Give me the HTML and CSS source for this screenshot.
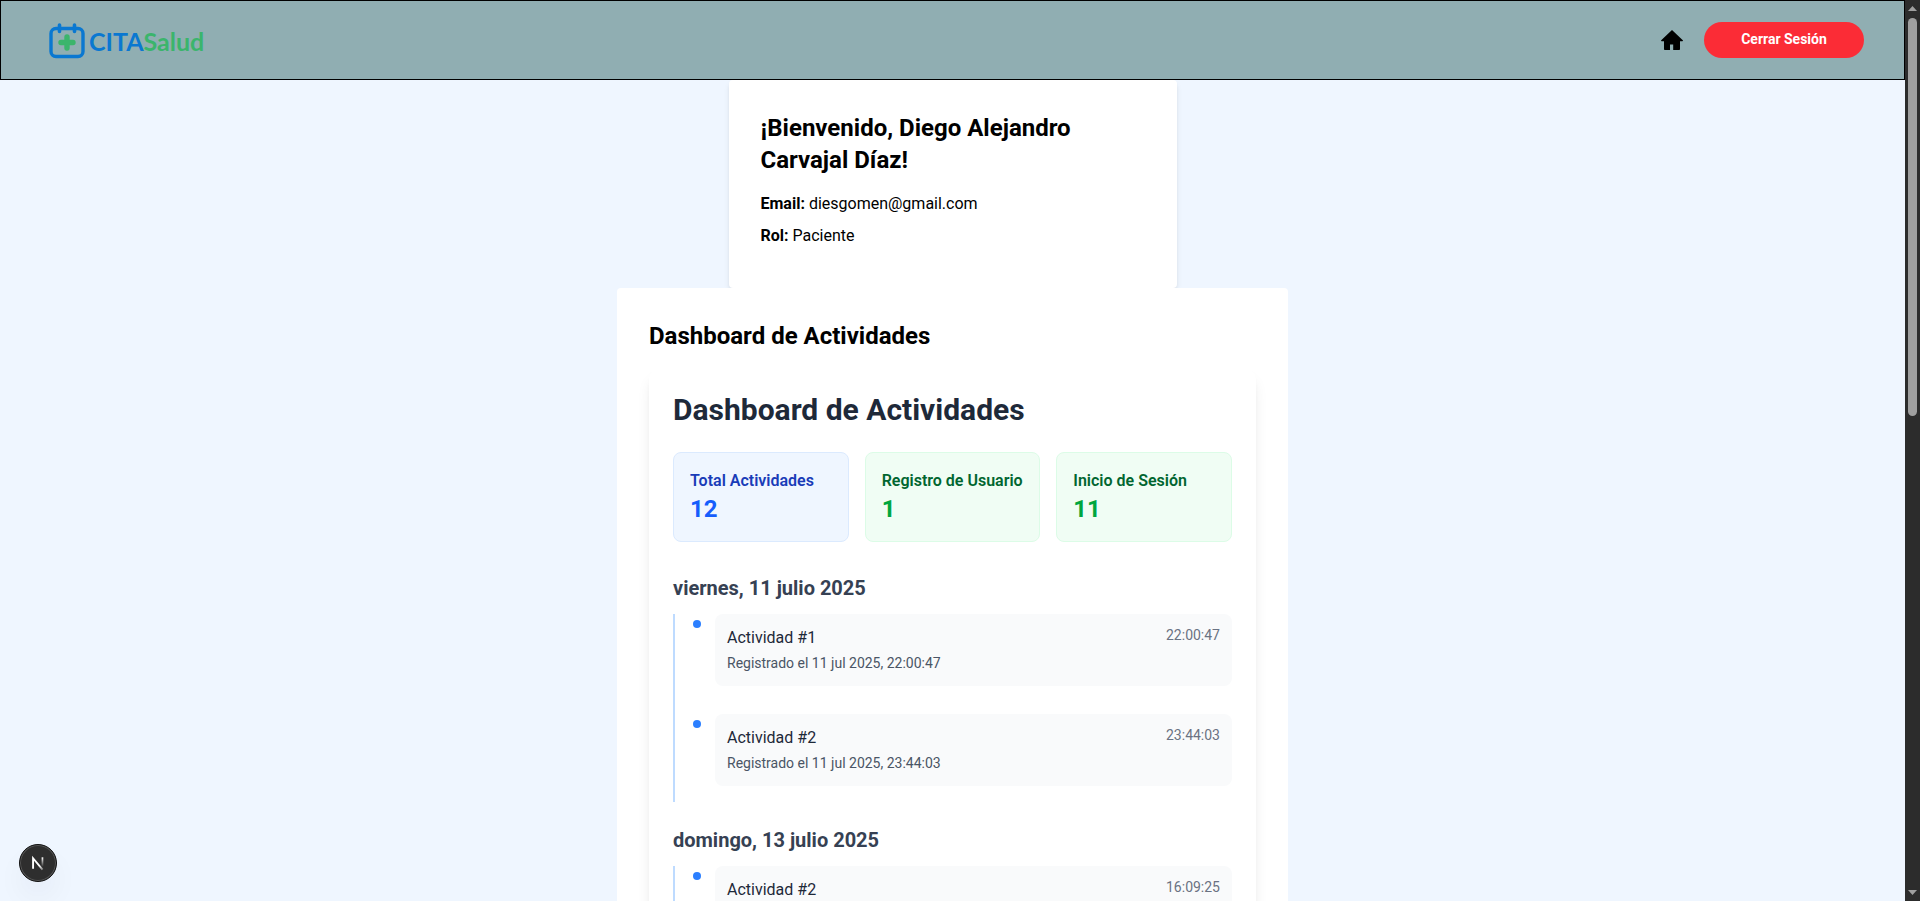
FILE: index.html
```html
<!DOCTYPE html>
<html lang="es">
<head>
<meta charset="utf-8">
<meta name="viewport" content="width=device-width, initial-scale=1">
<title>CITASalud</title>
<link rel="stylesheet" href="styles.css">
</head>
<body>
<div class="window">
  <div class="page">
    <header class="topbar">
      <a class="logo" href="#" aria-label="CITASalud">
        <svg class="logo-mark" viewBox="0 0 36 36" aria-hidden="true">
          <rect x="2" y="5.500" width="32" height="28" rx="5" fill="none" stroke="#0a78d1" stroke-width="3.400"/>
          <path d="M10.500 2v6.500M25.500 2v6.500" stroke="#0a78d1" stroke-width="3.600" stroke-linecap="round"/>
          <path d="M18 14v11M12 19.500h12" stroke="#3bb56c" stroke-width="5.400" stroke-linecap="round"/>
        </svg>
        <span class="logo-text"><span class="logo-cita">CITA</span><span class="logo-salud">Salud</span></span>
      </a>
      <nav class="actions">
        <a class="home" href="#" aria-label="Inicio">
          <svg viewBox="0 0 24 24" width="24" height="24" aria-hidden="true"><path d="M12 2 1.200 12.300c-.4.500-.1.900.4.900H4V21.200c0 .5.300.8.800.8H10v-5.500h3.200V22h6c.5 0 .8-.3.800-.8v-8h2.400c.5 0 .8-.4.400-.9Z"/></svg>
        </a>
        <button class="logout" type="button">Cerrar Sesión</button>
      </nav>
    </header>

    <main class="content">
      <section class="profile">
        <h1 class="title">¡Bienvenido, Diego Alejandro Carvajal Díaz!</h1>
        <p class="field"><strong>Email:</strong> diesgomen@gmail.com</p>
        <p class="field"><strong>Rol:</strong> Paciente</p>
      </section>

      <section class="activities">
        <h2 class="title">Dashboard de Actividades</h2>
        <div class="dashboard">
          <h2 class="dashboard-title">Dashboard de Actividades</h2>
          <div class="stats">
            <div class="stat stat-total"><h3 class="stat-label">Total Actividades</h3><p class="stat-value">12</p></div>
            <div class="stat"><h3 class="stat-label">Registro de Usuario</h3><p class="stat-value">1</p></div>
            <div class="stat"><h3 class="stat-label">Inicio de Sesión</h3><p class="stat-value">11</p></div>
          </div>

          <div class="days">
            <section class="day">
              <h3 class="day-title">viernes, 11 julio 2025</h3>
              <ul class="timeline">
                <li class="event">
                  <span class="dot"></span>
                  <div class="event-card">
                    <div><p class="event-name">Actividad #1</p><p class="event-date">Registrado el 11 jul 2025, 22:00:47</p></div>
                    <time class="event-time">22:00:47</time>
                  </div>
                </li>
                <li class="event">
                  <span class="dot"></span>
                  <div class="event-card">
                    <div><p class="event-name">Actividad #2</p><p class="event-date">Registrado el 11 jul 2025, 23:44:03</p></div>
                    <time class="event-time">23:44:03</time>
                  </div>
                </li>
              </ul>
            </section>
            <section class="day">
              <h3 class="day-title">domingo, 13 julio 2025</h3>
              <ul class="timeline">
                <li class="event">
                  <span class="dot"></span>
                  <div class="event-card">
                    <div><p class="event-name">Actividad #2</p></div>
                    <time class="event-time">16:09:25</time>
                  </div>
                </li>
              </ul>
            </section>
          </div>
        </div>
      </section>
    </main>
  </div>

  <div class="scrollbar" aria-hidden="true">
    <svg class="arrow" viewBox="0 0 9 5"><path d="M4.500 0 9 5H0Z"/></svg>
    <div class="track"><div class="thumb"></div></div>
    <svg class="arrow" viewBox="0 0 9 5"><path d="M0 0h9L4.500 5Z"/></svg>
  </div>

  <button class="dev-badge" type="button" aria-label="Next.js">
    <svg viewBox="0 0 38 38" width="38" height="38" aria-hidden="true">
      <defs>
        <linearGradient id="diag" x1="18" y1="18" x2="25" y2="27" gradientUnits="userSpaceOnUse"><stop offset=".4" stop-color="#fff"/><stop offset="1" stop-color="#fff" stop-opacity=".2"/></linearGradient>
        <linearGradient id="stem" x1="0" y1="13" x2="0" y2="23" gradientUnits="userSpaceOnUse"><stop offset="0" stop-color="#fff"/><stop offset="1" stop-color="#fff" stop-opacity="0"/></linearGradient>
      </defs>
      <path d="M13.800 25V14l10 12" fill="none" stroke="url(#diag)" stroke-width="2"/>
      <path d="M23.700 13v10" stroke="url(#stem)" stroke-width="1.800"/>
    </svg>
  </button>
</div>
</body>
</html>
```

FILE: styles.css
```css
* { box-sizing: border-box; margin: 0; padding: 0; }

body {
  font: 16px/24px Roboto, "Liberation Sans", sans-serif;
  color: #000;
  background: #eff6ff;
}

a { color: inherit; text-decoration: none; }
button { font: inherit; border: 0; cursor: pointer; }

.window { display: flex; height: 100vh; overflow: hidden; }
.page { flex: 1; min-width: 0; overflow: hidden; }

.topbar {
  display: flex;
  align-items: center;
  justify-content: space-between;
  height: 80px;
  padding: 0 40px;
  border: 1px solid #000;
  background: #90aeb2;
}
.logo { display: flex; align-items: center; gap: 4px; padding: 2px 0 0 8px; }
.logo-mark { width: 36px; height: 36px; }
.logo-text { font: 700 25px/32px Lato, sans-serif; }
.logo-cita { color: #0a78d1; }
.logo-salud { color: #3bb56c; }

.actions { display: flex; align-items: center; gap: 20px; }
.home { display: flex; }
.logout {
  width: 160px;
  height: 36px;
  padding-bottom: 2px;
  border-radius: 18px;
  background: #fb2c36;
  color: #fff;
  font-size: 14px;
  font-weight: 700;
  line-height: 20px;
}

.content { display: flex; flex-direction: column; align-items: center; }
.profile, .activities { width: 100%; padding: 32px; background: #fff; border-radius: 4px; }
.profile {
  max-width: 448px;
  box-shadow: 0 4px 6px -1px rgba(0, 0, 0, .1), 0 2px 4px -2px rgba(0, 0, 0, .1);
}
.activities { max-width: 671px; position: relative; }
.title { margin-bottom: 16px; font-size: 24px; font-weight: 700; line-height: 32px; }
.field { margin-bottom: 8px; }
.field strong { font-weight: 700; }

.dashboard {
  padding: 24px;
  border-radius: 12px;
  background: #fff;
  box-shadow: 0 10px 15px -3px rgba(0, 0, 0, .1), 0 4px 6px -4px rgba(0, 0, 0, .1);
}
.dashboard-title { margin-bottom: 24px; color: #1e2939; font-size: 30px; font-weight: 700; line-height: 36px; }

.stats { display: grid; grid-template-columns: repeat(3, 1fr); gap: 16px; margin-bottom: 32px; }
.stat {
  padding: 16px;
  border: 1px solid #dcfce7;
  border-radius: 8px;
  background: #f0fdf4;
  color: #00a63e;
}
.stat-label { color: #016630; font-size: 16px; font-weight: 600; line-height: 24px; white-space: nowrap; }
.stat-value { font-size: 24px; font-weight: 700; line-height: 32px; }
.stat-total { border-color: #dbeafe; background: #eff6ff; color: #155dfc; }
.stat-total .stat-label { color: #193cb8; }

.days { display: flex; flex-direction: column; gap: 24px; }
.day-title { margin-bottom: 12px; color: #364153; font-size: 20px; font-weight: 700; line-height: 28px; }
.timeline {
  display: flex;
  flex-direction: column;
  gap: 28px;
  padding: 0 0 16px 18px;
  border-left: 2px solid #bedbff;
  list-style: none;
}
.event { display: flex; align-items: flex-start; gap: 14px; }
.dot { width: 8px; height: 8px; margin-top: 6px; border-radius: 50%; background: #2b7fff; }
.event-card {
  display: flex;
  flex: 1;
  align-items: flex-start;
  justify-content: space-between;
  min-height: 72px;
  padding: 12px;
  border-radius: 8px;
  background: #f9fafb;
}
.event-name { margin-bottom: 4px; color: #1e2939; }
.event-date { color: #4a5565; font-size: 14px; line-height: 18px; }
.event-time { color: #6a7282; font-size: 14px; line-height: 18px; }

.scrollbar {
  display: flex;
  flex-direction: column;
  align-items: center;
  gap: 7px;
  width: 15px;
  padding: 6px 0;
  background: #2c2c2c;
}
.arrow { width: 9px; height: 5px; fill: #9f9f9f; }
.track { flex: 1; }
.thumb { width: 9px; height: 46%; border-radius: 5px; background: #9f9f9f; }

.dev-badge {
  position: fixed;
  left: 19px;
  bottom: 19px;
  display: flex;
  width: 38px;
  height: 38px;
  border: 1px solid #111;
  border-radius: 50%;
  background: #2e2e2e;
  box-shadow: inset 0 0 0 1px #555, 0 16px 32px -8px rgba(0, 0, 60, .12);
  align-items: center;
  justify-content: center;
}
```
